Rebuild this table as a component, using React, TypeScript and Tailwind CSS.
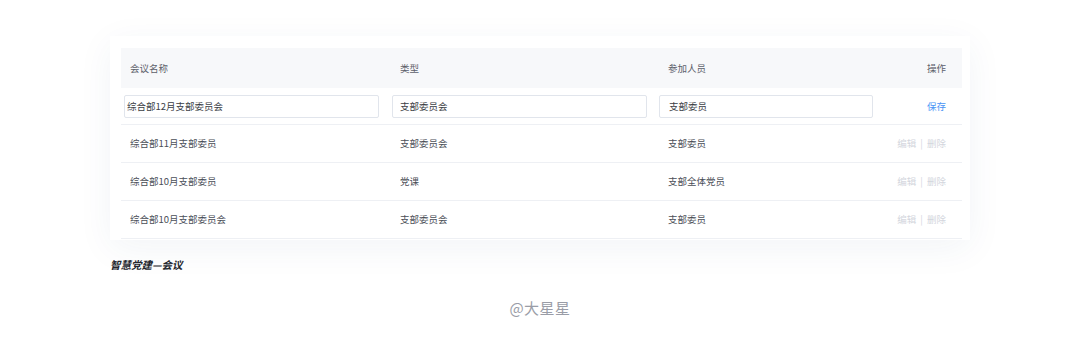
import React from "react";

type Meeting = {
  name: string;
  type: string;
  members: string;
};

const meetings: Meeting[] = [
  { name: "综合部11月支部委员", type: "支部委员会", members: "支部委员" },
  { name: "综合部10月支部委员", type: "党课", members: "支部全体党员" },
  { name: "综合部10月支部委员会", type: "支部委员会", members: "支部委员" },
];

const FONT = "font-['Noto_Sans_CJK_SC','Noto_Sans',sans-serif]";
const COLS = "grid grid-cols-[270px_268px_1fr_82px] items-center";

const EditInput = ({ value, className }: { value: string; className: string }) => (
  <input
    readOnly
    value={value}
    className={`h-[23px] rounded-[2px] border border-[#e1e5ec] bg-white px-[7px] text-[9.5px] text-[#3a3d44] outline-none ${className}`}
  />
);

const MeetingTable = () => {
  return (
    <div className="w-[841px] text-[9.5px]">
      {/* 表头 */}
      <div className={`${COLS} h-[40px] bg-[#f7f8fa] text-[#5c606a]`}>
        <div className="pl-[9px]">会议名称</div>
        <div className="pl-[9px]">类型</div>
        <div className="pl-[9px]">参加人员</div>
        <div className="pr-[16px] text-right">操作</div>
      </div>

      {/* 编辑中的行 */}
      <div className={`${COLS} h-[37px] border-b border-[#eef0f4]`}>
        <div className="pl-[3px]">
          <EditInput value="综合部12月支部委员会" className="w-[255px] pl-[2px]" />
        </div>
        <div className="pl-[1px]">
          <EditInput value="支部委员会" className="w-[255px]" />
        </div>
        <div>
          <EditInput value="支部委员" className="w-[214px] px-[9px]" />
        </div>
        <div className="pr-[16px] text-right text-[#4a94f5]">保存</div>
      </div>

      {meetings.map((m, i) => (
        <div
          key={i}
          className={`${COLS} h-[38px] border-b border-[#eef0f4] text-[#4a4e57]`}
        >
          <div className="pl-[9px]">{m.name}</div>
          <div className="pl-[9px]">{m.type}</div>
          <div className="pl-[9px]">{m.members}</div>
          <div className="pr-[16px] text-right text-[#d3d6dd]">
            编辑 <span className="mx-[2px]">|</span> 删除
          </div>
        </div>
      ))}
    </div>
  );
};

export default function App() {
  return (
    <div className={`relative h-[338px] w-[1080px] overflow-hidden bg-white ${FONT}`}>
      <div className="pl-[110px] pt-[36px]">
        <div className="w-[860px] bg-white pb-[1px] pl-[11px] pr-[8px] pt-[12px] shadow-[0_8px_34px_rgba(40,60,120,0.06)]">
          <MeetingTable />
        </div>
        <div className="mt-[18px] text-[10.5px] font-bold italic leading-[14px] text-[#23262d]">
          智慧党建—会议
        </div>
      </div>
      <div className="mt-[27px] text-center text-[15px] leading-[18px] tracking-[0.5px] text-[#9a9da7]">
        @大星星
      </div>
    </div>
  );
}
